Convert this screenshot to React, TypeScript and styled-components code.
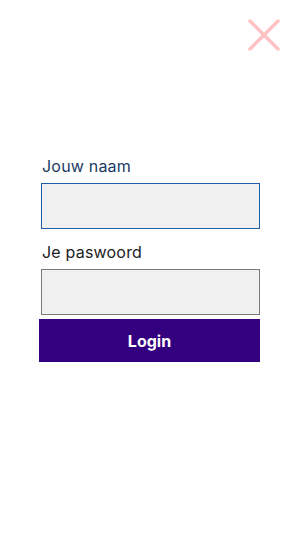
import React from "react";
import styled, { createGlobalStyle } from "styled-components";

const Global = createGlobalStyle`
  html, body { margin: 0; padding: 0; background: #ffffff; }
  body { font-family: Inter, "Noto Sans", sans-serif; }
  * { box-sizing: border-box; }
`;

const Page = styled.div`
  width: 300px;
  height: 533px;
  display: flex;
  flex-direction: column;
  background: #ffffff;
`;

const TopBar = styled.div`
  display: flex;
  justify-content: flex-end;
  padding: 17px 18px 0 0;
`;

const CloseButton = styled.button`
  width: 36px;
  height: 36px;
  padding: 0;
  border: none;
  background: transparent;
  display: flex;
  align-items: center;
  justify-content: center;
  cursor: pointer;
`;

const Form = styled.form`
  display: flex;
  flex-direction: column;
  padding: 103px 40px 0 39px;
`;

const Label = styled.label<{ $active?: boolean }>`
  display: block;
  font-size: 16px;
  line-height: 20px;
  letter-spacing: 0.2px;
  margin: ${(p) => (p.$active ? "0" : "13px")} 0 7px 3px;
  color: ${(p) => (p.$active ? "#1d3a64" : "#222222")};
`;

const Input = styled.input<{ $active?: boolean }>`
  display: block;
  margin-left: 2px;
  width: 219px;
  height: 46px;
  background: #f0f0f0;
  border: ${(p) => (p.$active ? "1.5px solid #1f5fa8" : "1.5px solid #7a7a7a")};
  outline: none;
  font-family: inherit;
  font-size: 16px;
  padding: 0 8px;
`;

const Submit = styled.button`
  margin-top: 4px;
  width: 221px;
  height: 43px;
  border: none;
  background: #33007f;
  color: #ffffff;
  font-family: Inter, "Noto Sans", sans-serif;
  font-weight: 700;
  font-size: 16px;
  cursor: pointer;
`;

export default function App() {
  return (
    <>
      <Global />
      <Page>
        <TopBar>
          <CloseButton aria-label="Sluiten">
            <svg width="36" height="36" viewBox="0 0 36 36">
              <path
                d="M4 4 L32 32 M32 4 L4 32"
                stroke="#ffc2c2"
                strokeWidth="3.5"
                strokeLinecap="round"
              />
            </svg>
          </CloseButton>
        </TopBar>
        <Form onSubmit={(e) => e.preventDefault()}>
          <Label $active htmlFor="naam">Jouw naam</Label>
          <Input $active id="naam" type="text" />
          <Label htmlFor="pw">Je paswoord</Label>
          <Input id="pw" type="password" />
          <Submit type="submit">Login</Submit>
        </Form>
      </Page>
    </>
  );
}
